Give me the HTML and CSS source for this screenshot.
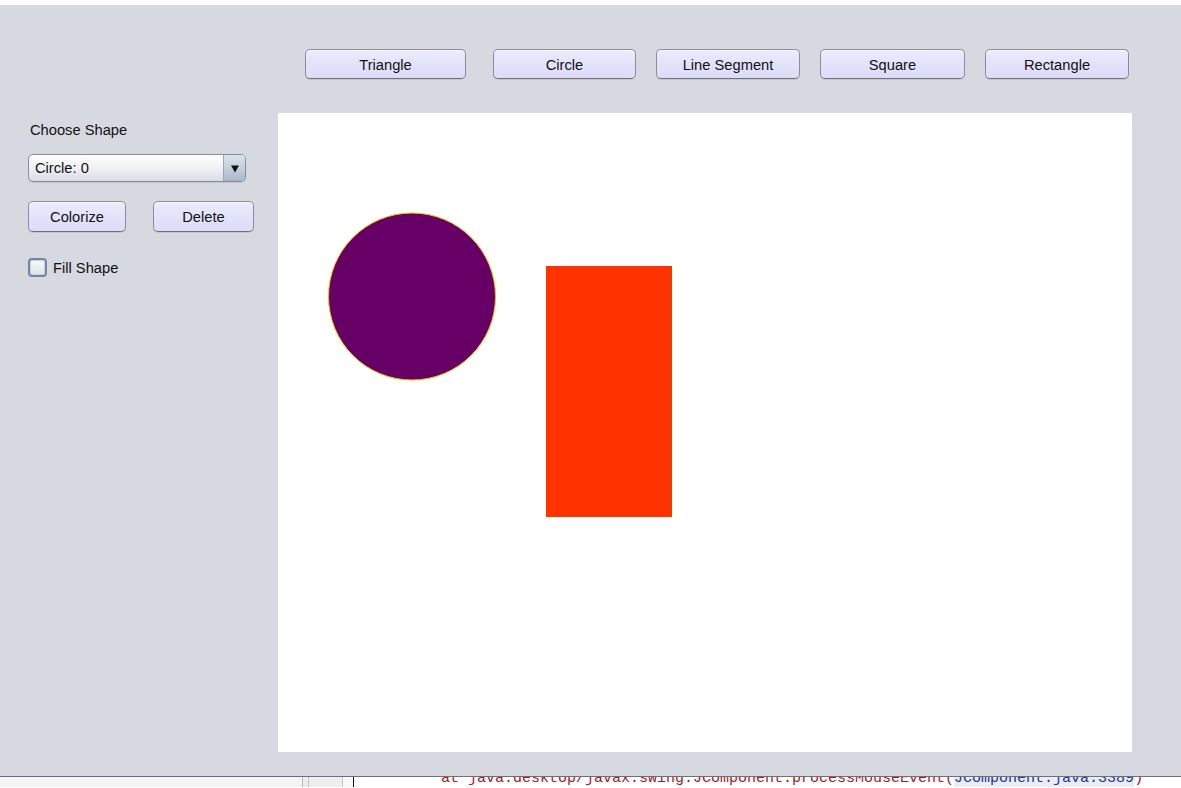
FILE: index.html
```html
<!DOCTYPE html>
<html>
<head>
<meta charset="utf-8">
<title>Shapes</title>
<link rel="stylesheet" href="styles.css">
</head>
<body>
<div class="topstrip"></div>
<div class="frame">
  <div class="toolbar">
    <button class="btn tb-triangle">Triangle</button>
    <button class="btn tb-circle">Circle</button>
    <button class="btn tb-line">Line Segment</button>
    <button class="btn tb-square">Square</button>
    <button class="btn tb-rect">Rectangle</button>
  </div>
  <div class="main">
    <div class="sidebar">
      <div class="label">Choose Shape</div>
      <div class="combo">
        <span class="combo-text">Circle: 0</span>
        <span class="combo-arrow"><svg width="10" height="9" viewBox="0 0 10 9"><path d="M1 1.5 L9 1.5 L5 8.5 Z" fill="#111"/></svg></span>
      </div>
      <div class="actions">
        <button class="btn side-colorize">Colorize</button>
        <button class="btn side-delete">Delete</button>
      </div>
      <label class="check">
        <span class="check-box"></span>
        <span class="check-text">Fill Shape</span>
      </label>
    </div>
    <div class="canvas">
      <svg width="854" height="639" viewBox="0 0 854 639">
        <circle cx="134" cy="183.5" r="83.5" fill="#660066" stroke="#f2c200" stroke-width="1"/>
        <rect x="268" y="153" width="126" height="251" fill="#ff3300"/>
      </svg>
    </div>
  </div>
</div>
<div class="console">
  <div class="console-left"></div>
  <div class="gutter g1"></div>
  <div class="gutter g2"></div>
  <div class="gutter g3"></div>
  <div class="console-text"><span class="trace">at java.desktop/javax.swing.JComponent.processMouseEvent(</span><span class="link">JComponent.java:3389</span><span class="trace">)</span></div>
</div>
</body>
</html>
```
FILE: styles.css
```css
html, body {
  margin: 0;
  padding: 0;
  background: #ffffff;
  width: 1181px;
  height: 788px;
  overflow: hidden;
  font-family: "Liberation Sans", Arial, sans-serif;
}

.topstrip {
  height: 5px;
  background: #ffffff;
}

.frame {
  height: 772px;
  background: #d6d9df;
  border-bottom: 1px solid #6f7074;
  box-sizing: border-box;
  display: flex;
  flex-direction: column;
}

.toolbar {
  height: 108px;
  box-sizing: border-box;
  padding-top: 44px;
  display: flex;
  align-items: flex-start;
}

.btn {
  font-family: "Liberation Sans", Arial, sans-serif;
  font-size: 14.7px;
  color: #111;
  height: 30px;
  padding: 1px 0 0 0;
  border: 1px solid #8b8e99;
  border-bottom-color: #6e717c;
  border-radius: 5px;
  background: linear-gradient(#ececfd 0%, #e3e3fb 45%, #dcdcf8 100%);
  box-shadow: inset 0 1px 0 #f7f7ff, 0 1px 0 #c4c6cc;
  box-sizing: border-box;
}

.tb-triangle { margin-left: 305px; width: 161px; }
.tb-circle { margin-left: 27px; width: 143px; }
.tb-line { margin-left: 20px; width: 144px; }
.tb-square { margin-left: 20px; width: 145px; }
.tb-rect { margin-left: 20px; width: 144px; }

.main {
  display: flex;
  flex: 1;
}

.sidebar {
  width: 278px;
  box-sizing: border-box;
  padding-left: 28px;
}

.label {
  font-size: 14.7px;
  color: #111;
  margin-left: 2px;
  margin-top: 8px;
  line-height: 18px;
}

.combo {
  margin-top: 15px;
  width: 218px;
  height: 28px;
  box-sizing: border-box;
  border: 1px solid #8a8e97;
  border-radius: 5px;
  background: linear-gradient(#fdfdfe 0%, #eff1f4 50%, #d9dde3 100%);
  display: flex;
  align-items: center;
  overflow: hidden;
  box-shadow: 0 1px 0 #c2c5cc;
}

.combo-text {
  flex: 1;
  font-size: 14.7px;
  color: #111;
  padding-left: 6px;
}

.combo-arrow {
  width: 21px;
  height: 100%;
  border-left: 1px solid #9aa6b4;
  background: linear-gradient(#dbe4ee 0%, #c3cfdc 50%, #a9b8c9 100%);
  display: flex;
  align-items: center;
  justify-content: center;
}

.actions {
  margin-top: 19px;
  display: flex;
}

.side-colorize { width: 98px; height: 31px; }
.side-delete { width: 101px; height: 31px; margin-left: 27px; }

.check {
  margin-top: 26px;
  display: flex;
  align-items: center;
}

.check-box {
  width: 19px;
  height: 19px;
  box-sizing: border-box;
  border: 2px solid #6f88a8;
  border-radius: 4px;
  background: linear-gradient(#f8f9fb, #dfe3e9);
  box-shadow: inset 0 0 0 1px #c9d3df;
}

.check-text {
  font-size: 14.7px;
  color: #111;
  margin-left: 6px;
}

.canvas {
  width: 854px;
  height: 639px;
  background: #ffffff;
}

.canvas svg {
  display: block;
}

.console {
  height: 10px;
  overflow: hidden;
  display: flex;
  background: #ffffff;
}

.console-left {
  width: 302px;
  background: #f5f5f5;
}

.gutter {
  box-sizing: border-box;
  height: 100%;
}

.g1 { width: 6px; border-left: 1px solid #b8b8b8; background: #ededed; }
.g2 { width: 35px; border-left: 1px solid #c4c4c4; border-right: 1px solid #c4c4c4; background: #eeeeee; }
.g3 { width: 11px; border-right: 1px solid #111; background: #f8f8f8; }

.console-text {
  margin-left: 87px;
  margin-top: -6px;
  font-family: "Liberation Mono", "Courier New", monospace;
  font-size: 15px;
  line-height: 15px;
  white-space: nowrap;
}

.trace { color: #b0151b; }
.link { color: #2233a0; background: #e9edf6; }
```
